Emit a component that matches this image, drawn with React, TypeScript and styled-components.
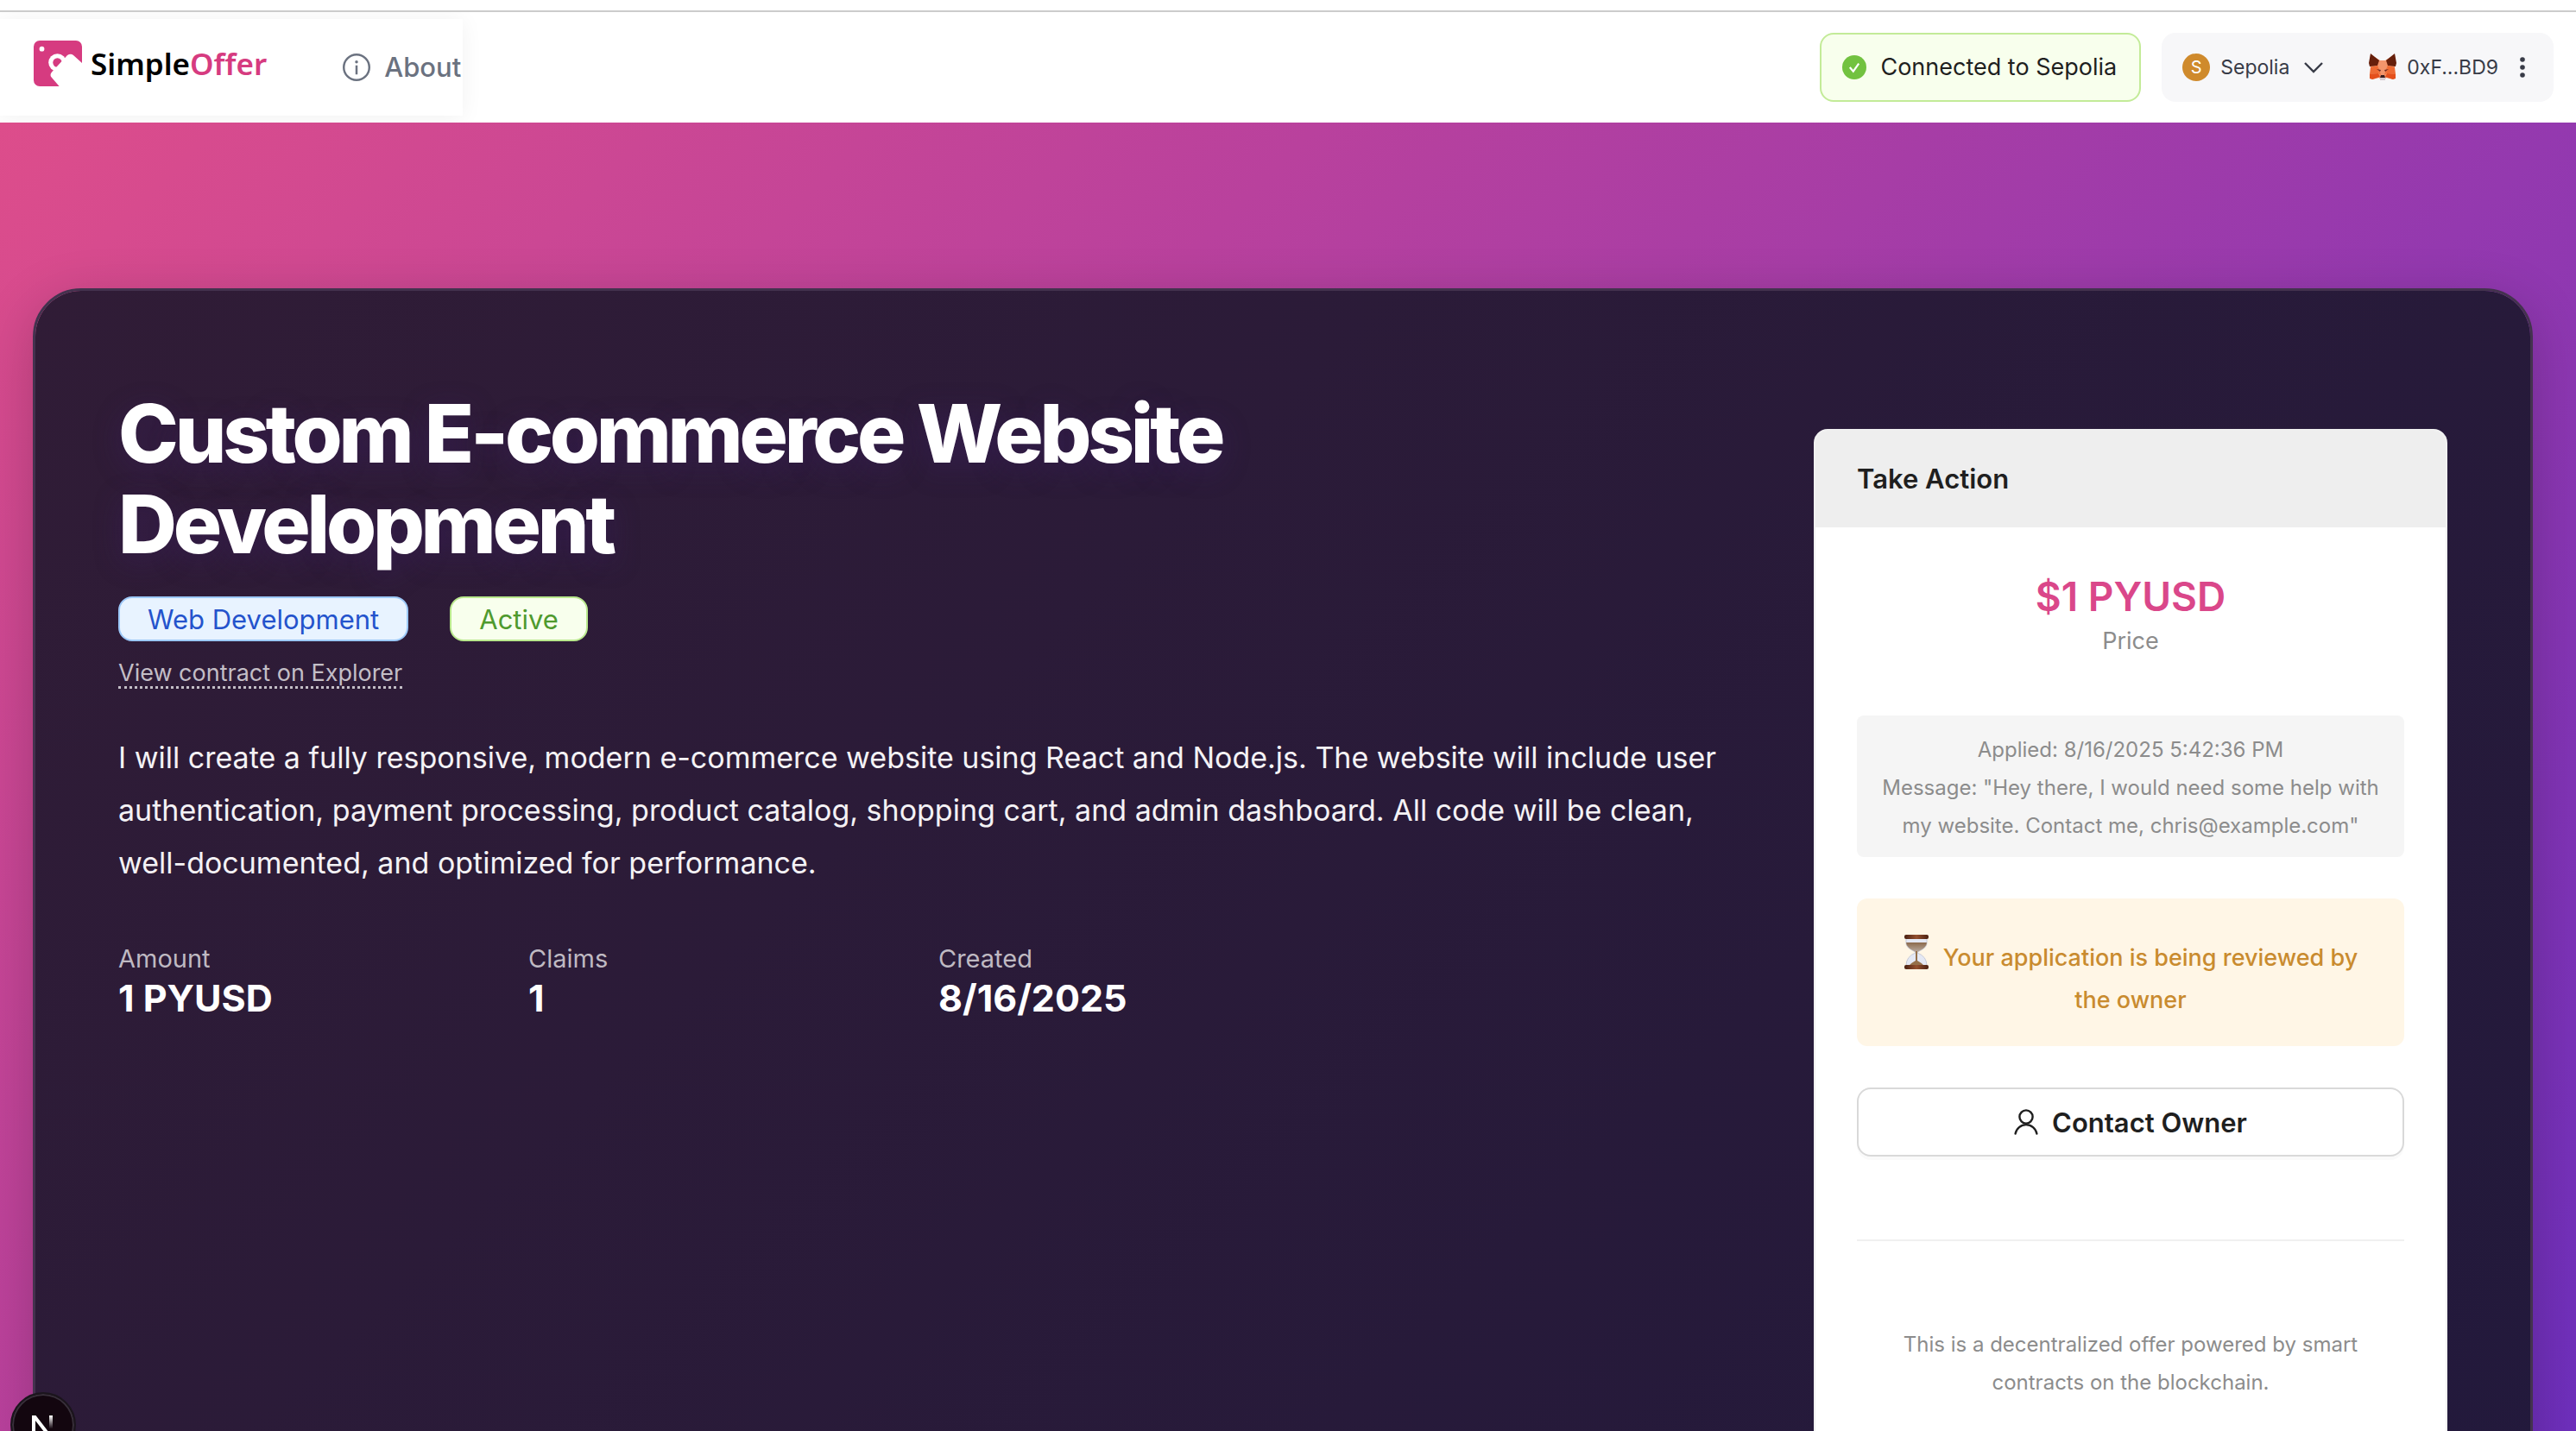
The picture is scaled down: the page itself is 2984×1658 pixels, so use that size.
import React from "react";
import styled, { createGlobalStyle } from "styled-components";

const Global = createGlobalStyle`
  *, *::before, *::after { box-sizing: border-box; }
  html, body { margin: 0; height: 100%; overflow: hidden; }
  body { font-family: Inter, Roboto, "Liberation Sans", sans-serif; color: #1f1f1f; background: #fff; }
  h1, h2, p, dl, dd, dt { margin: 0; }
  button, select { font: inherit; color: inherit; cursor: pointer; }
  svg { display: block; flex: none; }
`;

const Page = styled.div`
  display: flex;
  flex-direction: column;
  height: 100vh;
  overflow: hidden;
`;

const WindowEdge = styled.div`
  height: 14px;
  flex: none;
  border-bottom: 2px solid #ccc;
`;

const Header = styled.header`
  display: flex;
  align-items: center;
  justify-content: space-between;
  flex: none;
  height: 128px;
  padding: 8px 26px 8px 0;
  background: #fff;
  overflow: hidden;
`;

const Menu = styled.nav`
  display: flex;
  align-items: center;
  gap: 88px;
  height: 112px;
  padding: 0 2px 0 38px;
  background: #fff;
  box-shadow: 0 2px 24px rgba(0, 0, 0, 0.06);
`;

const Brand = styled.a`
  display: flex;
  align-items: center;
  gap: 10px;
  padding-bottom: 8px;
  color: #000;
  font: 600 35px/48px "Noto Sans", sans-serif;
  text-decoration: none;
`;

const BrandAccent = styled.span`
  color: #d63b80;
`;

const MenuLink = styled.a`
  display: flex;
  align-items: center;
  gap: 16px;
  color: #6b7280;
  font-size: 31px;
  font-weight: 500;
  line-height: 40px;
  text-decoration: none;
`;

const HeaderRight = styled.div`
  display: flex;
  align-items: center;
  gap: 24px;
`;

const NetworkStatus = styled.div`
  display: flex;
  align-items: center;
  gap: 16px;
  height: 80px;
  padding: 0 26px 0 24px;
  border: 2px solid #c3eb98;
  border-radius: 16px;
  background: #f8ffed;
  font-size: 27px;
  line-height: 40px;
`;

const Wallet = styled.div`
  display: flex;
  align-items: center;
  gap: 52px;
  height: 80px;
  padding: 0 24px;
  border-radius: 16px;
  background: #f7f7f9;
  color: #383b47;
  font-size: 23px;
`;

const WalletButton = styled.button`
  display: flex;
  align-items: center;
  gap: 12px;
  height: 64px;
  padding: 0;
  border: 0;
  background: none;
`;

const NetworkBadge = styled.span`
  display: grid;
  place-items: center;
  width: 32px;
  height: 32px;
  border-radius: 50%;
  background: #cf8a2c;
  color: #fff;
  font-size: 20px;
`;

const TrailingIcon = styled.span`
  margin-left: 4px;
`;

const Stage = styled.main`
  flex: 1;
  min-height: 0;
  padding: 192px 50px 0 38px;
  background: linear-gradient(135deg, #dd4d8b 0%, #b9419d 34%, #9439af 66%, #6e2fbc 100%);
`;

const Offer = styled.article`
  display: flex;
  align-items: flex-start;
  justify-content: space-between;
  height: 1500px;
  padding: 112px 96px 0;
  border: 3px solid #43324e;
  border-radius: 56px;
  background: linear-gradient(135deg, #301c36, #22193c) padding-box;
  box-shadow: 0 16px 64px rgba(0, 0, 0, 0.2);
`;

const Details = styled.section`
  display: flex;
  flex-direction: column;
  align-items: flex-start;
  flex: 0 1 1868px;
  color: #fff;
`;

const Title = styled.h1`
  max-width: 1420px;
  padding-top: 1px;
  font-size: 94px;
  font-weight: 800;
  line-height: 105px;
  letter-spacing: -0.045em;
  text-shadow: 0 8px 32px rgba(64, 32, 110, 0.4);
`;

const Tags = styled.div`
  display: flex;
  gap: 48px;
  margin-top: 31px;
`;

const Tag = styled.span<{ $tone: "blue" | "green" }>`
  height: 52px;
  padding: 1px 32px 0;
  border: 2px solid ${(p) => (p.$tone === "blue" ? "#9cc8f8" : "#b9e88d")};
  border-radius: 16px;
  background: ${(p) => (p.$tone === "blue" ? "#e8f3ff" : "#f8ffed")};
  color: ${(p) => (p.$tone === "blue" ? "#2453cc" : "#4f9a2e")};
  font-size: 31px;
  line-height: 48px;
`;

const ExplorerLink = styled.a`
  margin-top: 22px;
  border-bottom: 3px dotted #c3bec6;
  color: #c3bec6;
  font-size: 27px;
  line-height: 30px;
  text-decoration: none;
`;

const Description = styled.p`
  margin-top: 49px;
  color: #f4f2f5;
  font-size: 34px;
  line-height: 61px;
`;

const Stats = styled.dl`
  display: grid;
  grid-template-columns: repeat(3, 427px);
  gap: 48px;
  margin-top: 60px;
`;

const StatLabel = styled.dt`
  color: #bfb9c2;
  font-size: 29px;
  line-height: 42px;
`;

const StatValue = styled.dd`
  font-size: 43px;
  font-weight: 700;
  line-height: 48px;
`;

const ActionCard = styled.aside`
  flex: 0 0 734px;
  height: 1400px;
  margin-top: 48px;
  border: 2px solid #f0f0f0;
  border-radius: 16px;
  background: #fff;
  overflow: hidden;
`;

const ActionHeader = styled.h2`
  height: 112px;
  padding: 0 48px;
  background: #eee;
  font-size: 31px;
  font-weight: 600;
  line-height: 112px;
`;

const ActionBody = styled.div`
  display: flex;
  flex-direction: column;
  padding: 50px 48px 48px;
  text-align: center;
`;

const Price = styled.p`
  color: #da478a;
  font-size: 46px;
  font-weight: 600;
  line-height: 60px;
`;

const PriceLabel = styled.p`
  color: #8c8c8c;
  font-size: 27px;
  line-height: 44px;
`;

const Application = styled.div`
  margin-top: 64px;
  padding: 18px 24px 14px;
  border-radius: 8px;
  background: #f5f5f5;
  color: #8c8c8c;
  font-size: 24px;
  line-height: 44px;
`;

const Review = styled.p`
  margin-top: 48px;
  padding: 44px 40px 29px;
  border-radius: 12px;
  background: #fff6e6;
  color: #c98b2f;
  font-size: 27px;
  font-weight: 500;
  line-height: 49px;

  svg { display: inline-block; margin: -8px 16px 0 0; vertical-align: -4px; }
`;

const ContactButton = styled.button`
  display: flex;
  align-items: center;
  justify-content: center;
  gap: 16px;
  height: 80px;
  margin-top: 48px;
  border: 2px solid #d9d9d9;
  border-radius: 16px;
  background: #fff;
  box-shadow: 0 4px 0 rgba(0, 0, 0, 0.02);
  font-size: 31px;
  font-weight: 600;
`;

const Divider = styled.hr`
  width: 100%;
  height: 2px;
  margin: 96px 0 98px;
  border: 0;
  background: #f0f0f0;
`;

const Footnote = styled.p`
  padding: 0 32px;
  color: #8c8c8c;
  font-size: 24px;
  line-height: 44px;
`;

const DevBadge = styled.button`
  position: fixed;
  left: 12px;
  bottom: -31px;
  display: grid;
  place-items: center;
  width: 76px;
  height: 76px;
  padding: 0;
  border: 2px solid #1b151d;
  border-radius: 50%;
  background: #13060f;
  box-shadow: inset 0 0 0 2px #38303a;
`;

const Logo = () => (
  <svg width="57" height="54" viewBox="0 0 57 54" aria-hidden="true">
    <rect x="1" width="56" height="53" rx="7" fill="#d63b80" />
    <circle cx="10.500" cy="9.700" r="2.900" fill="#fff" />
    <circle cx="28.500" cy="25.500" r="10.300" fill="#fff" />
    <circle cx="28.500" cy="25.500" r="5.200" fill="#d63b80" />
    <path d="M40 17q4-2.500 7 0l10 9v28H31.500L22 43q-3-3 0-6.500Z" fill="#fff" />
  </svg>
);

const InfoIcon = () => (
  <svg width="32" height="32" viewBox="0 0 1024 1024" fill="currentColor" aria-hidden="true">
    <path d="M512 0a512 512 0 1 0 0 1024A512 512 0 0 0 512 0Zm0 946a434 434 0 1 1 0-868 434 434 0 0 1 0 868Z" />
    <path d="M472 440h80v332h-80zM456 312a56 56 0 1 1 112 0 56 56 0 0 1-112 0Z" />
  </svg>
);

const CheckIcon = () => (
  <svg width="28" height="28" viewBox="0 0 28 28" aria-hidden="true">
    <circle cx="14" cy="14" r="14" fill="#72c240" />
    <path d="m8.800 14 4 4.600 6.400-9" fill="none" stroke="#fff" strokeWidth="2.2" />
  </svg>
);

const FoxIcon = () => (
  <svg width="32" height="32" viewBox="0 0 32 32" aria-hidden="true">
    <path d="m2 1 11 7h6l11-7 1 12-2 6 2 6-3 5-8-2-2 3h-4l-2-3-8 2-3-5 2-6-2-6Z" fill="#f2956c" />
    <path d="m2 0 10 8-2 6-9 1-1-4ZM30 0 20 8l2 6 9 1 1-4Z" fill="#661f0b" />
    <path d="m2 16 8-2 3 7-2 2-10 1ZM30 16l-8-2-3 7 2 2 10 1Z" fill="#ee6a33" />
    <path d="m1 24 10-1 2 4-9 3-3-1ZM31 24l-10-1-2 4 9 3 3-1Z" fill="#e4501c" />
    <path d="m10 14 3 7 1 4-3-2-1-4ZM22 14l-3 7-1 4 3-2 1-4Z" fill="#f0733c" />
    <path d="m9 18 5 1-1 2ZM23 18l-5 1 1 2Z" fill="#702c22" />
    <path d="M13 27h6v4h-6Z" fill="#d5cbd0" />
    <path d="M14 25h4l1 3h-6Z" fill="#3a1d1c" />
  </svg>
);

const Chevron = () => (
  <svg width="24" height="24" viewBox="0 0 24 24" fill="none" stroke="currentColor" strokeWidth="2.4" aria-hidden="true">
    <path d="m2 7 10 10L22 7" />
  </svg>
);

const Dots = () => (
  <svg width="24" height="28" viewBox="0 0 24 28" fill="currentColor" aria-hidden="true">
    <circle cx="12" cy="5" r="2.8" /><circle cx="12" cy="14" r="2.8" /><circle cx="12" cy="23" r="2.8" />
  </svg>
);

const Hourglass = () => (
  <svg width="30" height="40" viewBox="0 0 30 40" aria-hidden="true">
    <defs>
      <linearGradient id="wood"><stop stopColor="#4a2012" /><stop offset=".5" stopColor="#94502e" /><stop offset="1" stopColor="#4a2012" /></linearGradient>
      <linearGradient id="sand" x2="0" y2="1"><stop stopColor="#8c6a4c" /><stop offset="1" stopColor="#b9aaa0" /></linearGradient>
    </defs>
    <path d="M3 4h24v6q0 5-9 9l-2 2q11 4 11 15H3q0-11 11-15l-2-2q-9-4-9-9Z" fill="#e4e8f4" stroke="#c8cbd8" />
    <path d="M3 9h24q0 6-11 11h-2Q3 15 3 9Z" fill="url(#sand)" />
    <path d="M14 19h2v11q4 2 8 6H6q4-4 8-6Z" fill="#95704a" />
    <rect x="1" y="0" width="28" height="5" rx="2" fill="url(#wood)" />
    <rect x="1" y="35" width="28" height="5" rx="2" fill="url(#wood)" />
  </svg>
);

const UserIcon = () => (
  <svg width="28" height="30" viewBox="0 0 28 30" fill="none" stroke="currentColor" strokeWidth="2.4" strokeLinecap="round" aria-hidden="true">
    <circle cx="14" cy="9" r="7.6" />
    <path d="M1.6 28.5a12.6 12.6 0 0 1 24.8 0" />
  </svg>
);

const NextMark = () => (
  <svg width="72" height="72" viewBox="2 2 72 72" aria-hidden="true">
    <defs><linearGradient id="stem" x2="0" y2="1"><stop stopColor="#fff" /><stop offset=".7" stopColor="#fff" stopOpacity="0" /></linearGradient></defs>
    <path d="M25 27h4.500l27 35-3 2.500L29 33v19h-4Z" fill="#fff" />
    <rect x="45" y="27" width="4" height="22" fill="url(#stem)" />
  </svg>
);

const stats = [
  { label: "Amount", value: "1 PYUSD" },
  { label: "Claims", value: "1" },
  { label: "Created", value: "8/16/2025" },
];

export default function App() {
  return (
    <Page>
      <Global />
      <WindowEdge />
      <Header>
        <Menu>
          <Brand href="#home">
            <Logo />
            <span>Simple<BrandAccent>Offer</BrandAccent></span>
          </Brand>
          <MenuLink href="#about"><InfoIcon />About</MenuLink>
        </Menu>
        <HeaderRight>
          <NetworkStatus role="status"><CheckIcon />Connected to Sepolia</NetworkStatus>
          <Wallet>
            <WalletButton type="button">
              <NetworkBadge>S</NetworkBadge>Sepolia<TrailingIcon><Chevron /></TrailingIcon>
            </WalletButton>
            <WalletButton type="button">
              <FoxIcon />0xF...BD9<TrailingIcon><Dots /></TrailingIcon>
            </WalletButton>
          </Wallet>
        </HeaderRight>
      </Header>
      <Stage>
        <Offer>
          <Details>
            <Title>Custom E-commerce Website Development</Title>
            <Tags>
              <Tag $tone="blue">Web Development</Tag>
              <Tag $tone="green">Active</Tag>
            </Tags>
            <ExplorerLink href="#contract">View contract on Explorer</ExplorerLink>
            <Description>
              I will create a fully responsive, modern e-commerce website using React and Node.js. The website will
              include user authentication, payment processing, product catalog, shopping cart, and admin dashboard.
              All code will be clean, well-documented, and optimized for performance.
            </Description>
            <Stats>
              {stats.map((s) => (
                <div key={s.label}>
                  <StatLabel>{s.label}</StatLabel>
                  <StatValue>{s.value}</StatValue>
                </div>
              ))}
            </Stats>
          </Details>
          <ActionCard>
            <ActionHeader>Take Action</ActionHeader>
            <ActionBody>
              <Price>$1 PYUSD</Price>
              <PriceLabel>Price</PriceLabel>
              <Application>
                <p>Applied: 8/16/2025 5:42:36 PM</p>
                <p>Message: "Hey there, I would need some help with my website. Contact me, chris@example.com"</p>
              </Application>
              <Review><Hourglass />Your application is being reviewed by the owner</Review>
              <ContactButton type="button"><UserIcon />Contact Owner</ContactButton>
              <Divider />
              <Footnote>This is a decentralized offer powered by smart contracts on the blockchain.</Footnote>
            </ActionBody>
          </ActionCard>
        </Offer>
      </Stage>
      <DevBadge type="button" aria-label="Open developer tools"><NextMark /></DevBadge>
    </Page>
  );
}
